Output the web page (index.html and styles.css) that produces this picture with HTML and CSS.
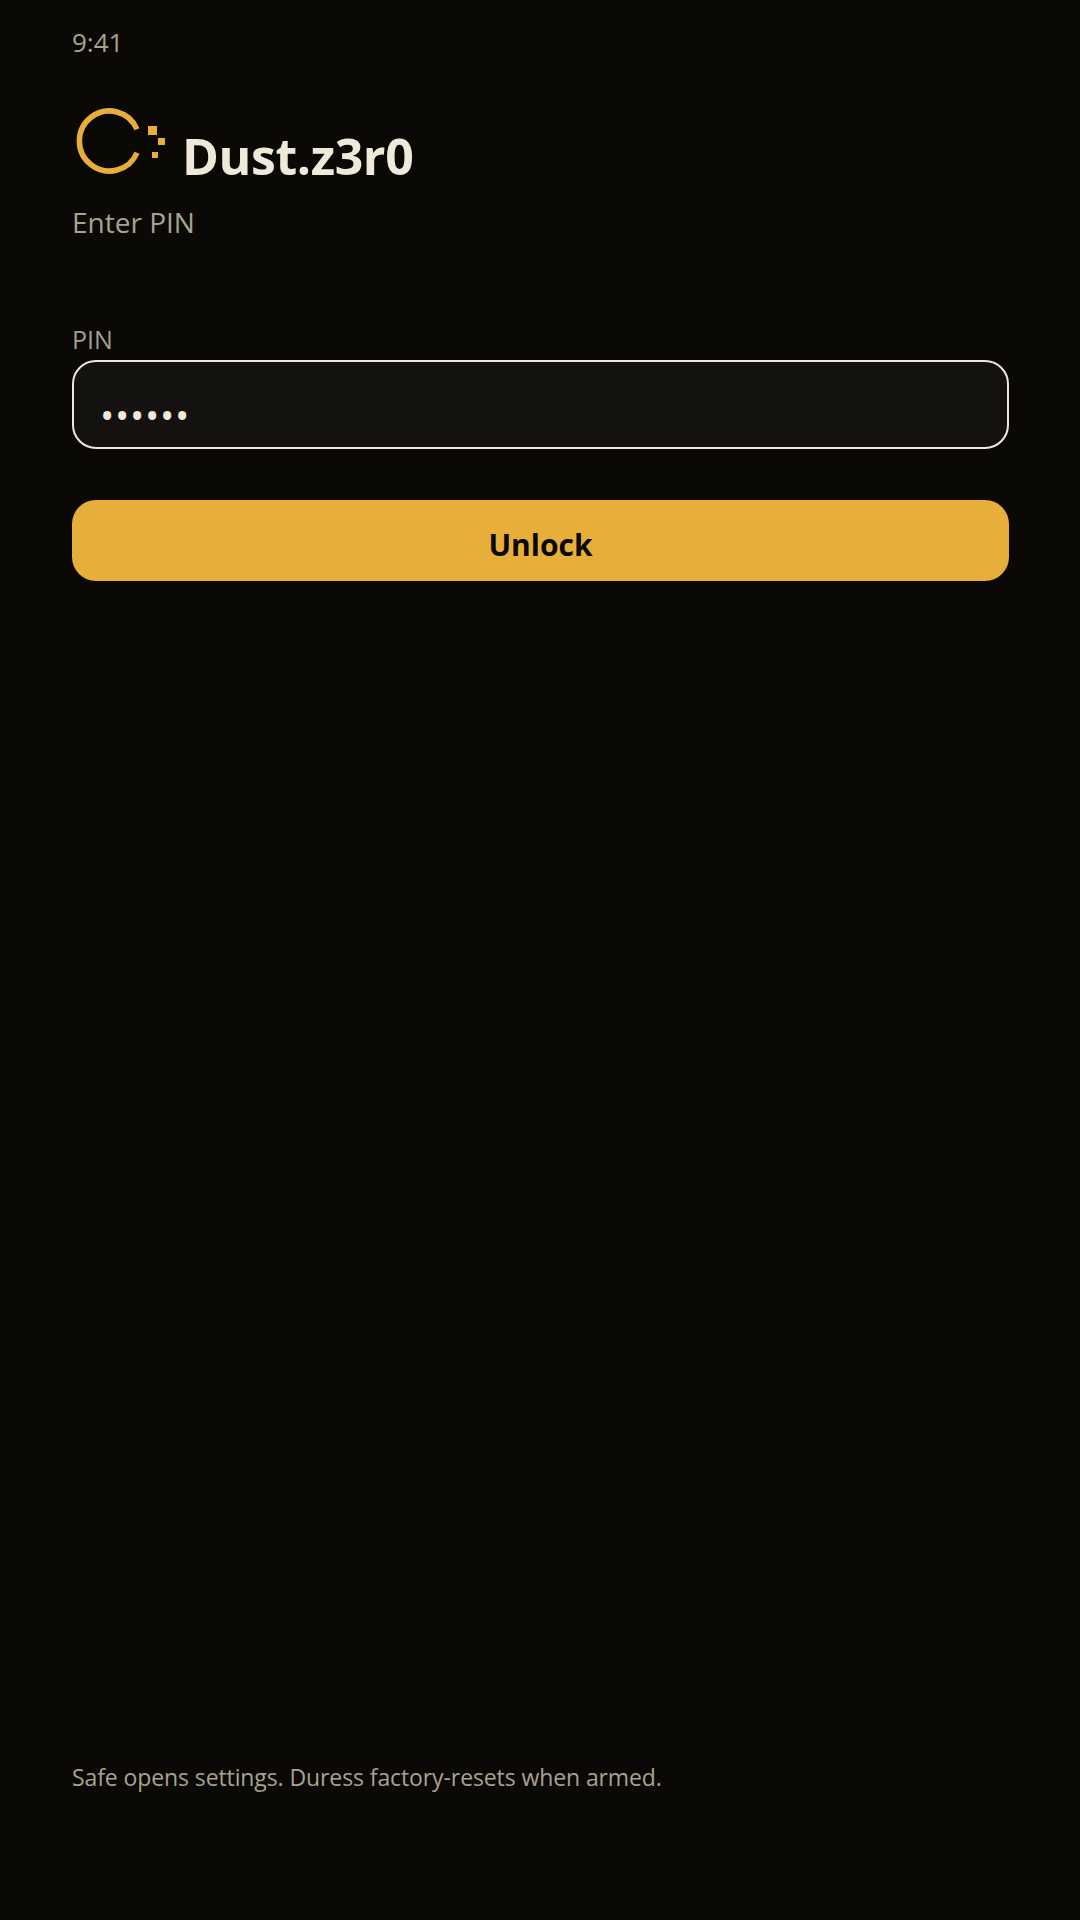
FILE: index.html
```html
<!DOCTYPE html>
<html lang="en">
<head>
    <meta charset="UTF-8">
    <title>Dust.z3r0</title>
    <link rel="stylesheet" href="styles.css">
</head>
<body>
    <div class="screen">
        <div class="clock">9:41</div>

        <!-- Logo and title -->
        <div class="brand">
            <svg class="logo" width="96" height="80" viewBox="0 0 96 80">
                <path d="M65 29.3 A30 30 0 1 0 65 52.7" fill="none" stroke="#e8ae3a" stroke-width="5.5"/>
                <rect x="76" y="26" width="9" height="9" fill="#e8ae3a"/>
                <rect x="86" y="38" width="7" height="7" fill="#e8ae3a"/>
                <rect x="80" y="52" width="6" height="6" fill="#e8ae3a"/>
            </svg>
            <h1 class="title">Dust.z3r0</h1>
        </div>
        <div class="subtitle">Enter PIN</div>

        <!-- PIN form -->
        <label class="field-label" for="pin">PIN</label>
        <input class="pin-input" id="pin" type="text" value="••••••" readonly>
        <button class="unlock">Unlock</button>

        <div class="hint">Safe opens settings. Duress factory-resets when armed.</div>
    </div>
</body>
</html>
```

FILE: styles.css
```css
* {
    box-sizing: border-box;
}

body {
    margin: 0;
    background-color: #0a0906;
    font-family: 'Open Sans', 'Noto Sans', sans-serif;
}

.screen {
    width: 1080px;
    height: 1920px;
    padding: 25px 71px 0 72px;
    display: flex;
    flex-direction: column;
}

.clock {
    font-size: 26px;
    line-height: 34px;
    color: #a8a290;
}

.brand {
    display: flex;
    gap: 14px;
    height: 88px;
    margin-top: 41px;
}

.title {
    margin: 24px 0 0;
    font-size: 50px;
    line-height: 64px;
    font-weight: 700;
    letter-spacing: -0.4px;
    color: #efe9da;
}

.subtitle {
    margin-top: 15px;
    font-size: 28px;
    line-height: 38px;
    color: #a8a290;
}

.field-label {
    margin-top: 82px;
    font-size: 25px;
    line-height: 32px;
    color: #a39d8e;
}

.pin-input {
    width: 100%;
    height: 89px;
    margin-top: 5px;
    padding: 21px 26px 0;
    background-color: #13120f;
    border: 2px solid #efe9da;
    border-radius: 24px;
    font-family: inherit;
    font-size: 38px;
    letter-spacing: 0.7px;
    color: #efe9da;
}

.unlock {
    width: 100%;
    height: 81px;
    margin-top: 51px;
    padding: 8px 0 0;
    background-color: #e8ae3a;
    border: none;
    border-radius: 24px;
    font-family: inherit;
    font-size: 30px;
    font-weight: 700;
    color: #0a0906;
}

.hint {
    margin-top: auto;
    margin-bottom: 127px;
    font-size: 23px;
    line-height: 32px;
    letter-spacing: -0.1px;
    color: #a8a290;
}
```
